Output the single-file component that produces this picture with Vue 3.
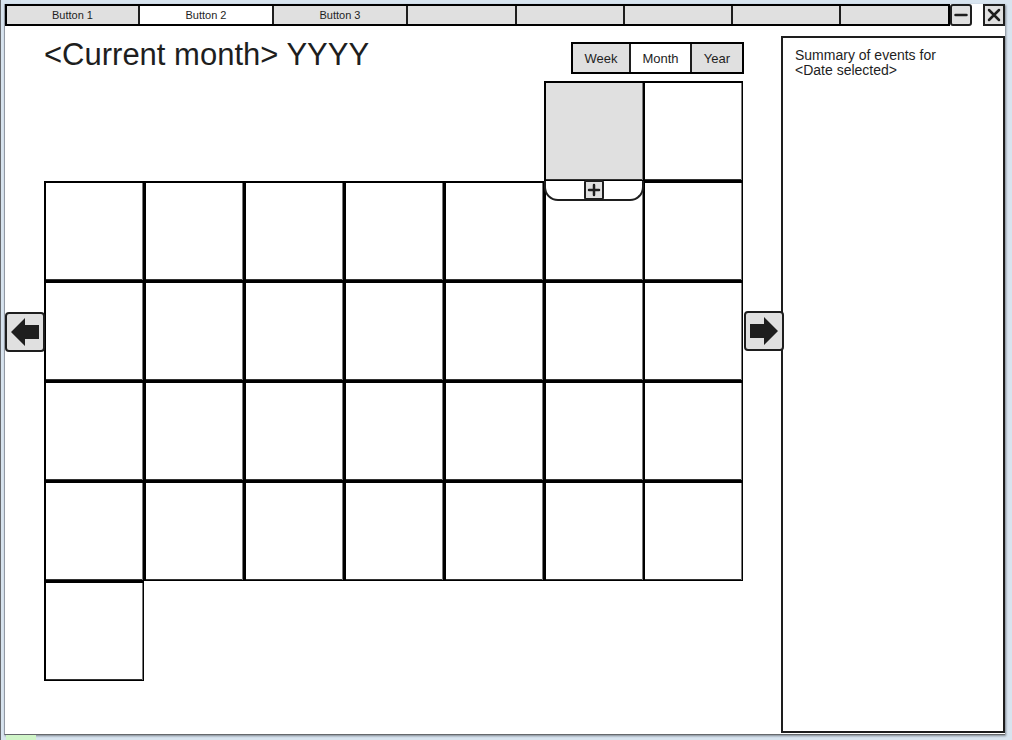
<script setup>
import { ref } from 'vue'

const tabs = ['Button 1', 'Button 2', 'Button 3', '', '', '', '', '']
const activeTab = ref(1)
const views = ['Week', 'Month', 'Year']
const activeView = ref('Month')
const days = Array.from({ length: 31 }, (_, i) => i + 1)
const selectedDay = ref(1)
</script>

<template>
  <div class="desktop">
    <div class="window">
      <header class="topbar">
        <nav class="tabs" aria-label="Sections">
          <button
            v-for="(tab, i) in tabs"
            :key="i"
            type="button"
            class="tab"
            :class="{ active: i === activeTab }"
            @click="activeTab = i"
          >{{ tab }}</button>
        </nav>
        <button type="button" class="minimize" aria-label="Minimize">
          <svg width="18" height="18" viewBox="0 0 18 18"><path d="M3.5 9h11" /></svg>
        </button>
        <button type="button" class="close" aria-label="Close">
          <svg width="18" height="18" viewBox="0 0 18 18"><path d="M4 4l10 10M14 4L4 14" /></svg>
        </button>
      </header>

      <div class="workspace">
        <div class="side">
          <button type="button" class="arrow prev" aria-label="Previous month">
            <svg width="36" height="36" viewBox="0 0 36 36"><path d="M4 18L18 4V11H32V25H18V32Z" /></svg>
          </button>
        </div>

        <main class="main">
          <div class="heading">
            <h1>&lt;Current month&gt; YYYY</h1>
            <div class="views">
              <button
                v-for="view in views"
                :key="view"
                type="button"
                class="view"
                :class="{ active: view === activeView }"
                @click="activeView = view"
              >{{ view }}</button>
            </div>
          </div>
          <div class="calendar">
            <div v-for="day in days" :key="day" class="slot" :class="{ current: day === selectedDay }">
              <button
                type="button"
                class="day"
                :aria-label="'Day ' + day"
                @click="selectedDay = day"
              ></button>
              <div v-if="day === selectedDay" class="drawer">
                <button type="button" class="add" aria-label="Add event">
                  <svg width="16" height="16" viewBox="0 0 16 16"><path d="M8 3v10M3 8h10" /></svg>
                </button>
              </div>
            </div>
          </div>
        </main>

        <div class="side">
          <button type="button" class="arrow next" aria-label="Next month">
            <svg width="36" height="36" viewBox="0 0 36 36"><path d="M32 18L18 4V11H4V25H18V32Z" /></svg>
          </button>
        </div>

        <aside class="summary">Summary of events for<br />&lt;Date selected&gt;</aside>
      </div>
    </div>
    <div class="taskbar"><span class="item"></span></div>
  </div>
</template>

<style>
html,
body {
  background: #d8e4ef;
}
</style>

<style scoped>
* {
  box-sizing: border-box;
}

.desktop {
  display: flex;
  flex-direction: column;
  min-height: 100vh;
  padding: 4px 7px 0 3px;
  border-left: 1px solid #66686c;
  font-family: "Liberation Sans", Arial, sans-serif;
  color: #1e1e1e;
}

.window {
  flex: 1;
  display: flex;
  flex-direction: column;
  background: #fff;
  border-left: 1px solid #9299a3;
  border-bottom: 1px solid #66696c;
  box-shadow: 1px 1px 2px #7d858e;
}

button {
  display: flex;
  align-items: center;
  justify-content: center;
  margin: 0;
  padding: 0;
  border: 0;
  border-radius: 0;
  background: #e0e0e0;
  color: inherit;
  font-family: inherit;
}

svg {
  display: block;
  flex: none;
}

.topbar {
  display: flex;
  height: 22px;
}

.tabs {
  flex: 1;
  display: grid;
  grid-template-columns: 133fr 134fr 134fr 109fr 108fr 108fr 108fr 107fr;
  border: 2px solid #000;
}

.tab {
  border-right: 2px solid #1e1e1e;
  font-size: 11px;
  line-height: 18px;
}

.tab:last-child {
  border-right: 0;
}

.tab.active,
.view.active {
  background: #fff;
}

.minimize,
.close {
  width: 22px;
  border: 2px solid #1e1e1e;
}

.minimize {
  border-radius: 3px;
}

.close {
  margin-left: 11px;
}

.minimize path,
.close path,
.add path {
  fill: none;
  stroke: #1e1e1e;
  stroke-width: 2.500;
  stroke-linecap: round;
}

.workspace {
  flex: 1;
  display: grid;
  grid-template-columns: 39px 1fr 38px 224px;
}

.side {
  padding-top: 286px;
}

.arrow {
  position: relative;
  z-index: 1;
  width: 40px;
  height: 40px;
  border: 2px solid #1e1e1e;
  border-radius: 4px;
}

.arrow path {
  fill: #1e1e1e;
}

.next {
  margin: -1px 0 0 1px;
}

.heading {
  display: flex;
  justify-content: space-between;
  height: 55px;
  padding-top: 11px;
}

h1 {
  margin: 0;
  font-size: 31px;
  font-weight: 400;
  line-height: 36px;
}

.views {
  display: flex;
  height: 32px;
  margin: 5px -1px 0 0;
  border: 2px solid #000;
}

.view {
  width: 58px;
  border-right: 2px solid #1e1e1e;
  font-size: 13px;
}

.view:nth-child(2) {
  width: 61px;
}

.view:last-child {
  width: 50px;
  border-right: 0;
}

.calendar {
  display: grid;
  grid-template-columns: repeat(6, 100fr) 99fr;
  grid-auto-rows: 100px;
}

.slot {
  position: relative;
}

.slot:first-child {
  grid-column: 6;
}

.slot:nth-child(7n + 2) {
  margin-left: -1px;
}

.day {
  width: 100%;
  height: 100%;
  background: #fff;
  border: solid #000;
  border-width: 2px 1px 1px 2px;
  box-shadow: inset -1px 0 #777, inset 0 -1px #333;
}

.current {
  z-index: 1;
}

.current .day {
  background: #e0e0e0;
}

.drawer {
  position: absolute;
  top: 100%;
  left: 0;
  right: 0;
  display: flex;
  justify-content: center;
  height: 20px;
  background: #fff;
  border: solid #1e1e1e;
  border-width: 0 2px 2px;
  border-radius: 0 0 14px 14px;
}

.add {
  width: 20px;
  height: 20px;
  margin-top: -1px;
  border: 2px solid #1e1e1e;
  border-radius: 2px;
}

.summary {
  margin-top: 10px;
  margin-bottom: 1px;
  padding: 10px 12px;
  border: 2px solid #1e1e1e;
  font-size: 14px;
  line-height: 15px;
}

.taskbar {
  height: 5px;
  padding-left: 2px;
}

.item {
  display: block;
  width: 30px;
  height: 5px;
  background: #d0f5c8;
}
</style>
